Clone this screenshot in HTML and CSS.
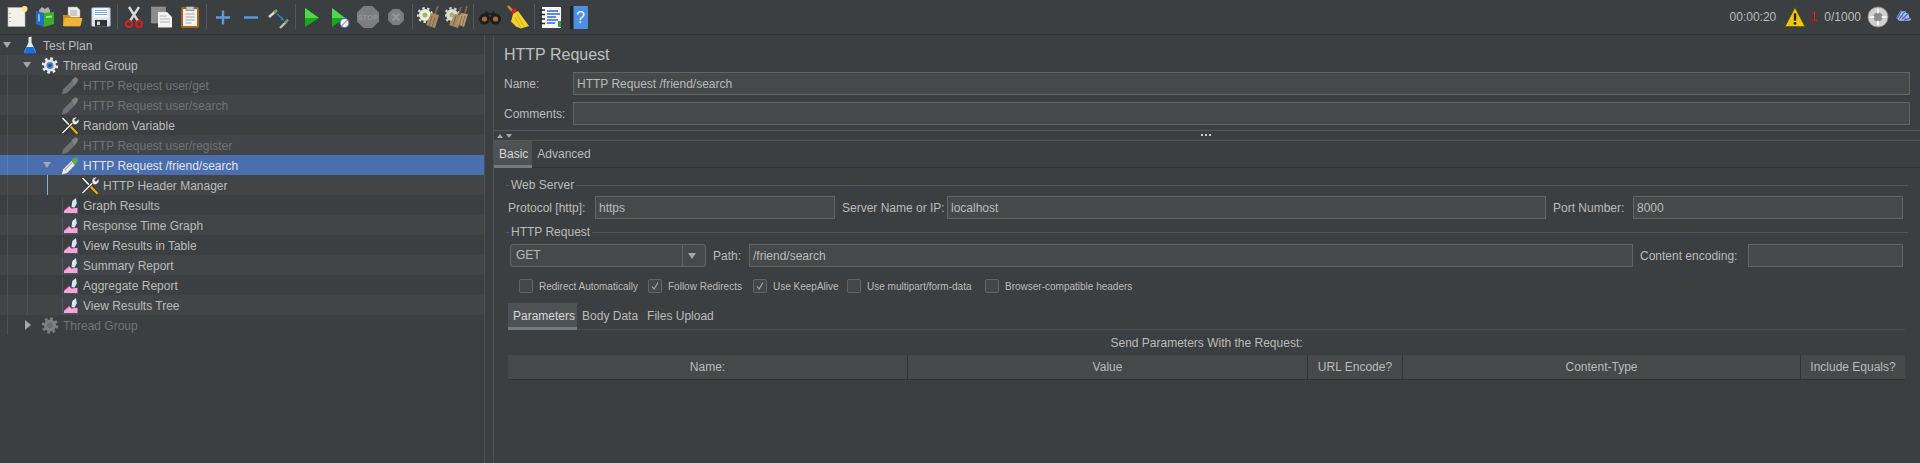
FILE: index.html
```html
<!DOCTYPE html>
<html lang="en">
<head>
  <meta charset="UTF-8">
  <title>Apache JMeter</title>
  <link rel="stylesheet" href="styles.css">
</head>
<body>
  <svg class="sprite" xmlns="http://www.w3.org/2000/svg">
    <symbol id="i-new" viewBox="0 0 24 24">
      <rect x="3" y="2.500" width="17" height="19" fill="#f3f2ea" stroke="#b5b5ad" stroke-width=".6"/>
      <circle cx="19.500" cy="4" r="3" fill="#f7ea8a"/>
      <path d="M5 8v1M5 12v1M5 16v1" stroke="#888" stroke-width="1"/>
    </symbol>
    <symbol id="i-templates" viewBox="0 0 24 24">
      <path d="M6 5l3-3 3 2 3-2 2 3v4H6z" fill="#a9b4ad"/>
      <path d="M3 6l8 2v14l-8-3z" fill="#1f6fc0"/>
      <path d="M5 9l2 .6v7L5 16z" fill="#7fb6e6"/>
      <path d="M11 8l10-1v12l-10 3z" fill="#37b02b"/>
      <path d="M13 11l6-.6v2l-6 .6z" fill="#a2e08c"/>
    </symbol>
    <symbol id="i-open" viewBox="0 0 24 24">
      <path d="M7 2h9l3 3v9H7z" fill="#eee" stroke="#999" stroke-width=".5"/>
      <path d="M9 6h7M9 8h7M9 10h7" stroke="#999" stroke-width=".8"/>
      <path d="M2 10h6l2 2h9v9.500H4a2 2 0 0 1-2-2z" fill="#c98f18"/>
      <path d="M2 21l2-8h17.500l-2 8z" fill="#eeb53b"/>
    </symbol>
    <symbol id="i-save" viewBox="0 0 24 24">
      <rect x="2.500" y="2.500" width="19" height="19" rx="1.500" fill="#dbe3ec" stroke="#7e8b99" stroke-width=".6"/>
      <rect x="5" y="3.500" width="14" height="9" fill="#f8fbff"/>
      <path d="M6 5.500h12M6 7.500h12M6 9.500h12" stroke="#6f9fd2" stroke-width=".9"/>
      <rect x="6" y="15" width="12" height="6.500" fill="#2f3133"/>
      <rect x="8" y="16.500" width="3" height="3.500" fill="#d8d8d8"/>
    </symbol>
    <symbol id="i-cut" viewBox="0 0 24 24">
      <path d="M7 2l9 14M17 2L8 16" stroke="#d8d8d8" stroke-width="2.400"/>
      <circle cx="7" cy="19" r="3" fill="none" stroke="#d8201c" stroke-width="2"/>
      <circle cx="17" cy="19" r="3" fill="none" stroke="#d8201c" stroke-width="2"/>
    </symbol>
    <symbol id="i-copy" viewBox="0 0 24 24">
      <rect x="1.500" y="2" width="14" height="16" fill="#8c8c8c" stroke="#a5a5a5" stroke-width=".5"/>
      <path d="M8 7h9l5 5v10.500H8z" fill="#f2f2f2"/>
      <path d="M10 11h7M10 14h10M10 17h10" stroke="#aaa" stroke-width=".8"/>
    </symbol>
    <symbol id="i-paste" viewBox="0 0 24 24">
      <rect x="4" y="3" width="16" height="19" rx="1" fill="#f1f1ef" stroke="#a8641c" stroke-width="2"/>
      <rect x="8" y="1.500" width="8" height="4" fill="#c9c9c6" stroke="#555" stroke-width=".5"/>
      <path d="M7.500 9h9M7.500 12h9M7.500 15h9M7.500 18h6" stroke="#999" stroke-width=".8"/>
    </symbol>
    <symbol id="i-plus" viewBox="0 0 24 24">
      <path d="M5 12.500h14M12 5.500v14" stroke="#5f9bd8" stroke-width="2.400"/>
    </symbol>
    <symbol id="i-minus" viewBox="0 0 24 24">
      <path d="M5 12.500h14" stroke="#5f9bd8" stroke-width="2.400"/>
    </symbol>
    <symbol id="i-toggle" viewBox="0 0 24 24">
      <path d="M2 12l7-6" stroke="#d6d6d6" stroke-width="2.400"/>
      <path d="M7 7.500l3-2.500" stroke="#6cab52" stroke-width="2.600"/>
      <path d="M13 23l7-7" stroke="#bdbdbd" stroke-width="2.400"/>
      <path d="M18 18l3-3.500" stroke="#6f9a63" stroke-width="2.600"/>
      <path d="M10 9l6 5" stroke="#2e86dc" stroke-width="1.300"/>
      <path d="M17 15.500l-3.500-.5 2-2.500z" fill="#2e86dc"/>
    </symbol>
    <symbol id="i-start" viewBox="0 0 24 24">
      <path d="M5 3l14 10L5 22z" fill="#18a81c"/>
      <path d="M5 3l14 10H5z" fill="#4fd84a"/>
    </symbol>
    <symbol id="i-start-np" viewBox="0 0 24 24">
      <path d="M4 3l13 10L4 22z" fill="#18a81c"/>
      <path d="M4 3l13 10H4z" fill="#4fd84a"/>
      <circle cx="16.500" cy="18" r="4.500" fill="#f4f6fa" stroke="#3f6fd0" stroke-width="1"/>
      <path d="M13.500 21l6-6" stroke="#d44" stroke-width="1"/>
    </symbol>
    <symbol id="i-stop" viewBox="0 0 24 24">
      <path d="M7.500 1h9L23 7.500v9L16.500 23h-9L1 16.500v-9z" fill="#7b7d7e"/>
      <text x="12" y="15" text-anchor="middle" font-family="Liberation Sans, sans-serif" font-size="7.500" font-weight="700" fill="#939596">STOP</text>
    </symbol>
    <symbol id="i-shutdown" viewBox="0 0 24 24">
      <path d="M8 2.500h8l5.500 5.500v8L16 21.500H8L2.500 16V8z" fill="#7b7d7e"/>
      <path d="M8 8l8 8M16 8l-8 8" stroke="#949596" stroke-width="3"/>
    </symbol>
    <symbol id="i-clear" viewBox="0 0 24 24">
      <circle cx="8" cy="10" r="6" fill="#eeeeea"/>
      <circle cx="8" cy="10" r="7" fill="none" stroke="#e3e3df" stroke-width="2" stroke-dasharray="2.500 2.500"/>
      <circle cx="8" cy="10" r="2.500" fill="#8ec63f"/>
      <path d="M21 1l-3 8" stroke="#8a6a45" stroke-width="1.500"/>
      <path d="M14 8l8 2-4 13-9-3z" fill="#a98a63"/>
      <path d="M15 11l-3 10M18 12l-3 10" stroke="#7d6040" stroke-width=".8"/>
    </symbol>
    <symbol id="i-clear-all" viewBox="0 0 24 24">
      <circle cx="7" cy="10" r="6" fill="#deded9"/>
      <circle cx="7" cy="10" r="7" fill="none" stroke="#d6d6d2" stroke-width="2" stroke-dasharray="2.500 2.500"/>
      <circle cx="7" cy="10" r="2.500" fill="#9db86a"/>
      <path d="M16 2l-2 7M22 1l-2 7" stroke="#8a6a45" stroke-width="1.500"/>
      <path d="M10 9l7 1-4 13-9-3z" fill="#a98a63"/>
      <path d="M16 8l7 1-4 13-7-3z" fill="#b89a72"/>
      <path d="M11 11l-3 10M17 11l-3 10M20 11l-3 10" stroke="#7d6040" stroke-width=".8"/>
    </symbol>
    <symbol id="i-search" viewBox="0 0 24 24">
      <path d="M8 6l3 2h2l3-2 2 4h-12z" fill="#222"/>
      <circle cx="6.500" cy="14" r="5.500" fill="#1d1d1d"/>
      <circle cx="17.500" cy="14" r="5.500" fill="#1d1d1d"/>
      <circle cx="6.500" cy="14" r="2.600" fill="#a8673a"/>
      <circle cx="17.500" cy="14" r="2.600" fill="#a8673a"/>
    </symbol>
    <symbol id="i-broom" viewBox="0 0 24 24">
      <path d="M2 1l7 8" stroke="#c98a2a" stroke-width="2.400"/>
      <path d="M5 6l4-3 2.500 3.500-3.500 3z" fill="#d8201c"/>
      <path d="M7 9l5-3 11 15-8 2.500-5-2-5-5z" fill="#f2d32c"/>
      <path d="M11 9l7 13M8.500 12l6 10" stroke="#c9a216" stroke-width=".8"/>
    </symbol>
    <symbol id="i-function" viewBox="0 0 24 24">
      <rect x="3" y="2" width="19" height="21" fill="#fbfbfb"/>
      <path d="M1 5h5M1 9.500h5M1 14h5M1 18.500h5" stroke="#222" stroke-width="1.500"/>
      <path d="M8 6h11M8 9h13M8 12h9M8 15h11M8 18h8" stroke="#2a64d8" stroke-width="1.300"/>
      <rect x="19" y="16" width="3" height="6" fill="#3f9a3c"/>
    </symbol>
    <symbol id="i-help" viewBox="0 0 24 24">
      <rect x="3" y="1" width="18" height="23" rx="1" fill="#4c8fe0"/>
      <rect x="3" y="1" width="3.500" height="23" fill="#20242c"/>
      <text x="13.500" y="18" text-anchor="middle" font-family="Liberation Sans, sans-serif" font-size="16" fill="#eef4fc">?</text>
    </symbol>
    <symbol id="i-warn" viewBox="0 0 24 24">
      <path d="M12 1.500L23 22.500H1z" fill="#f2c511" stroke="#5a4b10" stroke-width="1"/>
      <path d="M12 8v8" stroke="#222" stroke-width="2.600"/>
      <circle cx="12" cy="19" r="1.500" fill="#222"/>
    </symbol>
    <symbol id="i-remote" viewBox="0 0 24 24">
      <circle cx="12" cy="12" r="11" fill="#cfcfcf"/>
      <circle cx="12" cy="12" r="11" fill="none" stroke="#8d8d8d" stroke-width=".8"/>
      <circle cx="12" cy="12" r="5" fill="#8a8a8a"/>
      <path d="M12 3v5M12 16v5M3 12h5M16 12h5" stroke="#f6f6f6" stroke-width="2.200"/>
    </symbol>
    <symbol id="i-log" viewBox="0 0 24 24">
      <path d="M2 14L8 3l3 2 3-1 2 3 3 1 1 5 3 3-3 2H6z" fill="#a9c0f0"/>
      <path d="M3 15L9 4M6 16L14 5M10 16L18 8M13 17L22 14" stroke="#2f5fd0" stroke-width="1.500"/>
      <path d="M3 10l16 6" stroke="#e04848" stroke-width="1"/>
    </symbol>
    <symbol id="i-plan" viewBox="0 0 24 24">
      <path d="M10 1l4-1v8l6 13H4L10 8z" fill="#e8edf2"/>
      <path d="M7.500 14h9l4 8.500H3.500z" fill="#1a6fe0"/>
    </symbol>
    <symbol id="i-gear" viewBox="0 0 24 24">
      <circle cx="12" cy="12" r="9" fill="none" stroke="#e8ecf0" stroke-width="4" stroke-dasharray="3.500 3.570"/>
      <circle cx="12" cy="12" r="8" fill="#e3e7eb"/>
      <circle cx="12" cy="12" r="4.600" fill="#5c7fb0"/>
      <circle cx="12" cy="12" r="2.400" fill="#1f4fa0"/>
    </symbol>
    <symbol id="i-gear-off" viewBox="0 0 24 24">
      <circle cx="12" cy="12" r="9" fill="none" stroke="#7d7f80" stroke-width="4" stroke-dasharray="3.500 3.570"/>
      <circle cx="12" cy="12" r="8" fill="#7d7f80"/>
      <circle cx="12" cy="12" r="4" fill="#6a6c6d"/>
    </symbol>
    <symbol id="i-pen-off" viewBox="0 0 24 24">
      <path d="M1 24l2-7L14 6l5 5L8 22z" fill="#6f7173"/>
      <path d="M14 5l5-4 4 2-1 4-4 5z" fill="#7f8183"/>
    </symbol>
    <symbol id="i-pen" viewBox="0 0 24 24">
      <path d="M1 24l2-7L14 6l5 5L8 22z" fill="#e9e9e9"/>
      <path d="M5 18L15 8" stroke="#555" stroke-width=".8"/>
      <path d="M14 5l5-4 4 2-1 4-4 5z" fill="#62a85a"/>
    </symbol>
    <symbol id="i-tool" viewBox="0 0 24 24">
      <path d="M2 2l20 21" stroke="#1f1f1f" stroke-width="4.200"/>
      <path d="M2 2l11 11.500" stroke="#f0f0f0" stroke-width="2.400"/>
      <path d="M13 13.500l9 9.500" stroke="#f0b400" stroke-width="3"/>
      <path d="M2 22L17 7" stroke="#1f1f1f" stroke-width="3.600"/>
      <path d="M2 22L17 7" stroke="#f2f2f2" stroke-width="2.200"/>
      <path d="M14.500 6a5.500 5.500 0 0 1 7-5l-3.500 3.500 2 2L23.500 3a5.500 5.500 0 0 1-7 7.500z" fill="#f2f2f2" stroke="#1f1f1f" stroke-width=".7"/>
    </symbol>
    <symbol id="i-chart" viewBox="0 0 24 24">
      <path d="M2 2v21h21" fill="none" stroke="#6f7477" stroke-width="1" stroke-dasharray="1.500 1"/>
      <path d="M4 22v-3l7-6 3 3 8-1v7z" fill="#f4a6dc"/>
      <path d="M4 19l7-6 3 3" fill="none" stroke="#d050a8" stroke-width="1"/>
      <path d="M14 14l1-8 5-4 1 7-3 6z" fill="#d0e8fc"/>
    </symbol>
  </svg>

  <header class="toolbar">
    <span class="tool"><svg><use href="#i-new"/></svg></span>
    <span class="tool"><svg><use href="#i-templates"/></svg></span>
    <span class="tool"><svg><use href="#i-open"/></svg></span>
    <span class="tool"><svg><use href="#i-save"/></svg></span>
    <span class="sep"></span>
    <span class="tool"><svg><use href="#i-cut"/></svg></span>
    <span class="tool"><svg><use href="#i-copy"/></svg></span>
    <span class="tool"><svg><use href="#i-paste"/></svg></span>
    <span class="sep"></span>
    <span class="tool"><svg><use href="#i-plus"/></svg></span>
    <span class="tool"><svg><use href="#i-minus"/></svg></span>
    <span class="tool"><svg><use href="#i-toggle"/></svg></span>
    <span class="sep"></span>
    <span class="tool"><svg><use href="#i-start"/></svg></span>
    <span class="tool"><svg><use href="#i-start-np"/></svg></span>
    <span class="tool"><svg><use href="#i-stop"/></svg></span>
    <span class="tool small"><svg><use href="#i-shutdown"/></svg></span>
    <span class="sep"></span>
    <span class="tool"><svg><use href="#i-clear"/></svg></span>
    <span class="tool"><svg><use href="#i-clear-all"/></svg></span>
    <span class="sep"></span>
    <span class="tool"><svg><use href="#i-search"/></svg></span>
    <span class="tool"><svg><use href="#i-broom"/></svg></span>
    <span class="sep"></span>
    <span class="tool"><svg><use href="#i-function"/></svg></span>
    <span class="tool"><svg><use href="#i-help"/></svg></span>

    <div class="status">
      <span class="timer">00:00:20</span>
      <svg class="warn"><use href="#i-warn"/></svg>
      <span class="err">1</span>
      <span class="threads">0/1000</span>
      <svg class="remote"><use href="#i-remote"/></svg>
      <svg class="log"><use href="#i-log"/></svg>
    </div>
  </header>

  <div class="main">
    <nav class="tree">
      <div class="row"><span class="twist down"></span><svg class="ico"><use href="#i-plan"/></svg><span>Test Plan</span></div>
      <div class="row"><i class="guide"></i><span class="twist down"></span><svg class="ico"><use href="#i-gear"/></svg><span>Thread Group</span></div>
      <div class="row off"><i class="guide"></i><i class="guide"></i><span class="twist"></span><svg class="ico"><use href="#i-pen-off"/></svg><span>HTTP Request user/get</span></div>
      <div class="row off"><i class="guide"></i><i class="guide"></i><span class="twist"></span><svg class="ico"><use href="#i-pen-off"/></svg><span>HTTP Request user/search</span></div>
      <div class="row"><i class="guide"></i><i class="guide"></i><span class="twist"></span><svg class="ico"><use href="#i-tool"/></svg><span>Random Variable</span></div>
      <div class="row off"><i class="guide"></i><i class="guide"></i><span class="twist"></span><svg class="ico"><use href="#i-pen-off"/></svg><span>HTTP Request user/register</span></div>
      <div class="row selected"><i class="guide"></i><i class="guide"></i><span class="twist down"></span><svg class="ico"><use href="#i-pen"/></svg><span>HTTP Request /friend/search</span></div>
      <div class="row"><i class="guide"></i><i class="guide"></i><i class="guide blue"></i><span class="twist"></span><svg class="ico"><use href="#i-tool"/></svg><span>HTTP Header Manager</span></div>
      <div class="row"><i class="guide"></i><i class="guide"></i><span class="twist"></span><svg class="ico"><use href="#i-chart"/></svg><span>Graph Results</span></div>
      <div class="row"><i class="guide"></i><i class="guide"></i><span class="twist"></span><svg class="ico"><use href="#i-chart"/></svg><span>Response Time Graph</span></div>
      <div class="row"><i class="guide"></i><i class="guide"></i><span class="twist"></span><svg class="ico"><use href="#i-chart"/></svg><span>View Results in Table</span></div>
      <div class="row"><i class="guide"></i><i class="guide"></i><span class="twist"></span><svg class="ico"><use href="#i-chart"/></svg><span>Summary Report</span></div>
      <div class="row"><i class="guide"></i><i class="guide"></i><span class="twist"></span><svg class="ico"><use href="#i-chart"/></svg><span>Aggregate Report</span></div>
      <div class="row"><i class="guide"></i><i class="guide"></i><span class="twist"></span><svg class="ico"><use href="#i-chart"/></svg><span>View Results Tree</span></div>
      <div class="row off"><i class="guide"></i><span class="twist right"></span><svg class="ico"><use href="#i-gear-off"/></svg><span>Thread Group</span></div>
    </nav>

    <div class="splitter"></div>

    <section class="panel">
      <div class="head">
        <h1>HTTP Request</h1>
        <div class="name-row">
          <label>Name:</label>
          <input type="text" value="HTTP Request /friend/search">
          <label>Comments:</label>
          <input type="text">
        </div>
      </div>

      <div class="strip">
        <span class="nudge up"></span><span class="nudge"></span>
        <span class="grip"></span>
      </div>

      <div class="tabs">
        <span class="tab active">Basic</span>
        <span class="tab">Advanced</span>
      </div>

      <div class="basic">
        <div class="legend"><span>Web Server</span></div>
        <div class="server-row">
          <label>Protocol [http]:</label>
          <input type="text" value="https">
          <label class="pad">Server Name or IP:</label>
          <input type="text" value="localhost">
          <label class="pad">Port Number:</label>
          <input type="text" value="8000">
        </div>

        <div class="legend second"><span>HTTP Request</span></div>
        <div class="request-row">
          <div class="combo">
            <span class="combo-val">GET</span>
            <span class="combo-btn"><span class="twist down"></span></span>
          </div>
          <label class="pad">Path:</label>
          <input type="text" value="/friend/search">
          <label class="pad">Content encoding:</label>
          <input type="text">
        </div>

        <div class="checks">
          <label class="check c1"><span class="box"></span>Redirect Automatically</label>
          <label class="check c2"><span class="box on"><svg viewBox="0 0 14 14"><path d="M3.500 7.500l2.500 3L10.500 3" fill="none" stroke="#a9a9a9" stroke-width="1.300"/></svg></span>Follow Redirects</label>
          <label class="check c3"><span class="box on"><svg viewBox="0 0 14 14"><path d="M3.500 7.500l2.500 3L10.500 3" fill="none" stroke="#a9a9a9" stroke-width="1.300"/></svg></span>Use KeepAlive</label>
          <label class="check c4"><span class="box"></span>Use multipart/form-data</label>
          <label class="check"><span class="box"></span>Browser-compatible headers</label>
        </div>

        <div class="tabs inner">
          <span class="tab active">Parameters</span>
          <span class="tab">Body Data</span>
          <span class="tab">Files Upload</span>
        </div>

        <div class="caption">Send Parameters With the Request:</div>
        <div class="thead">
          <span>Name:</span>
          <span>Value</span>
          <span>URL Encode?</span>
          <span>Content-Type</span>
          <span>Include Equals?</span>
        </div>
      </div>
    </section>
  </div>
</body>
</html>
```

FILE: styles.css
```css
* {
  box-sizing: border-box;
  margin: 0;
  padding: 0;
}

html, body {
  height: 100%;
  overflow: hidden;
}

body {
  background: #3c3f41;
  color: #bbbbbb;
  font-family: "Liberation Sans", Arial, sans-serif;
  font-size: 12px;
  display: flex;
  flex-direction: column;
}

.sprite {
  display: none;
}

/* toolbar */
.toolbar {
  height: 35px;
  flex: none;
  display: flex;
  align-items: center;
  padding-left: 3px;
  padding-bottom: 1px;
  border-bottom: 1px solid #323232;
}

.tool {
  width: 28px;
  height: 24px;
  display: flex;
  justify-content: center;
  align-items: center;
}

.tool svg {
  width: 24px;
  height: 24px;
}

.tool.small svg {
  width: 20px;
  height: 20px;
}

.sep {
  width: 5px;
  height: 25px;
  display: flex;
  justify-content: center;
}

.sep::before {
  content: "";
  width: 1px;
  background: #555859;
}

.status {
  margin-left: auto;
  display: flex;
  align-items: center;
}

.timer {
  margin-right: 8px;
}

.warn {
  width: 22px;
  height: 22px;
  margin-right: 4px;
}

.err {
  color: #ff0000;
  width: 14px;
}

.threads {
  margin-right: 6px;
}

.remote {
  width: 22px;
  height: 22px;
  margin-right: 6px;
}

.log {
  width: 17px;
  height: 17px;
  margin-right: 8px;
}

.main {
  flex: 1;
  display: flex;
  min-height: 0;
}

/* tree */
.tree {
  width: 484px;
  flex: none;
}

.row {
  height: 20px;
  display: flex;
  align-items: center;
  padding-left: 2px;
  white-space: nowrap;
}

.row > span:last-child {
  padding-top: 1px;
}

.row:nth-child(even) {
  background: #414547;
}

.row:last-child {
  background: none;
}

.row.off {
  color: #717375;
}

.row.selected {
  background: #4b6eaf;
  color: #e0e4ea;
}

.guide {
  width: 15px;
  margin-left: 5px;
  align-self: stretch;
  border-left: 1px solid #4e5153;
}

.guide.blue {
  border-left-color: #7fb0e8;
}

.twist {
  width: 12px;
  height: 8px;
  flex: none;
  position: relative;
}

.twist.down::before,
.twist.right::before {
  content: "";
  position: absolute;
  left: 1px;
  top: 1px;
  border-style: solid;
  border-color: #a4a6a7 transparent transparent;
  border-width: 6px 4.500px 0;
}

.twist.right::before {
  left: 3px;
  top: -1px;
  border-color: transparent transparent transparent #a4a6a7;
  border-width: 5px 0 5px 6px;
}

.row.selected .guide {
  border-left-color: #5c7db8;
}

.ico {
  width: 18px;
  height: 19px;
  margin-left: 7px;
  margin-right: 4px;
  flex: none;
}

/* splitter */
.splitter {
  width: 10px;
  flex: none;
  border-left: 1px solid #4e5153;
  border-right: 1px solid #4e5153;
}

/* right panel */
.panel {
  flex: 1;
  min-width: 0;
}

.head {
  height: 96px;
  padding: 9px 10px 0;
  border-bottom: 1px solid #555555;
}

h1 {
  font-size: 16px;
  font-weight: normal;
  line-height: 22px;
  color: #c0c0c0;
}

.name-row {
  display: grid;
  grid-template-columns: 69px 1fr;
  row-gap: 7px;
  align-items: center;
  margin-top: 6px;
}

input[type="text"] {
  height: 23px;
  width: 100%;
  background: #45494a;
  border: 1px solid #646464;
  color: #bbbbbb;
  font: inherit;
  padding: 0 3px;
  outline: none;
}

.strip {
  height: 9px;
  position: relative;
  display: flex;
  align-items: center;
  gap: 3px;
  padding-left: 3px;
}

.nudge {
  border-style: solid;
  border-color: #a4a6a7 transparent transparent;
  border-width: 4px 3.500px 0;
}

.nudge.up {
  border-color: transparent transparent #a4a6a7;
  border-width: 0 3.500px 4px;
}

.grip {
  position: absolute;
  left: 707px;
  top: 3px;
  width: 10px;
  height: 2px;
  background: repeating-linear-gradient(90deg, #c8c8c8 0 2px, transparent 2px 4px);
}

.tabs {
  height: 28px;
  display: flex;
  border-top: 1px solid #555555;
  border-bottom: 1px solid #323232;
}

.tab {
  display: flex;
  align-items: center;
  padding: 1px 4px 1px 5px;
}

.tab.active {
  background: #4e5254;
  border-bottom: 3px solid #747a80;
  margin-bottom: -1px;
  padding-bottom: 0;
  color: #d8d8d8;
}

.inner .tab.active {
  padding-right: 2px;
}

.basic {
  padding: 9px 15px 0 14px;
}

.legend {
  height: 16px;
  margin: 0 -3px 0 -2px;
  display: flex;
  align-items: center;
  gap: 2px;
}

.legend.second {
  margin-top: 5px;
}

.legend::before {
  content: "";
  width: 3px;
  height: 1px;
  background: #555555;
}

.legend::after {
  content: "";
  flex: 1;
  height: 1px;
  background: #555555;
}

.server-row {
  display: grid;
  grid-template-columns: 87px 240px 112px 1fr 87px 270px;
  align-items: center;
  margin: 3px 2px 0 0;
}

.request-row {
  display: grid;
  grid-template-columns: 196px 43px 1fr 115px 155px;
  align-items: center;
  margin: 4px 2px 0 2px;
}

label.pad {
  padding-left: 7px;
}

.combo {
  height: 23px;
  display: flex;
  background: #45494a;
  border: 1px solid #646464;
  border-radius: 3px;
}

.combo-val {
  flex: 1;
  padding-left: 5px;
  line-height: 21px;
}

.combo-btn {
  width: 23px;
  border-left: 1px solid #646464;
  display: flex;
  align-items: center;
  padding-left: 4px;
}

.checks {
  display: flex;
  align-items: center;
  height: 14px;
  margin: 12px 0 0 11px;
  font-size: 10px;
}

.check {
  display: flex;
  align-items: center;
  gap: 6px;
}

.c1 {
  width: 129px;
}

.c2 {
  width: 105px;
}

.c3 {
  width: 94px;
}

.c4 {
  width: 138px;
}

.box {
  width: 14px;
  height: 14px;
  flex: none;
  border: 1px solid #646464;
  border-radius: 2px;
  background: #43474a;
}

.box svg {
  display: block;
  width: 12px;
  height: 12px;
}

.tabs.inner {
  height: 27px;
  margin: 10px 0 0;
  border-top: none;
  border-bottom-color: #4a4d4f;
}

.caption {
  height: 25px;
  line-height: 27px;
  text-align: center;
}

.thead {
  height: 25px;
  display: grid;
  grid-template-columns: 399px 400px 95px 398px 1fr;
  background: #45494a;
  border-bottom: 1px solid #323232;
}

.thead span {
  display: flex;
  align-items: center;
  justify-content: center;
  border-left: 1px solid #323232;
}

.thead span:first-child {
  border-left: none;
}
```
